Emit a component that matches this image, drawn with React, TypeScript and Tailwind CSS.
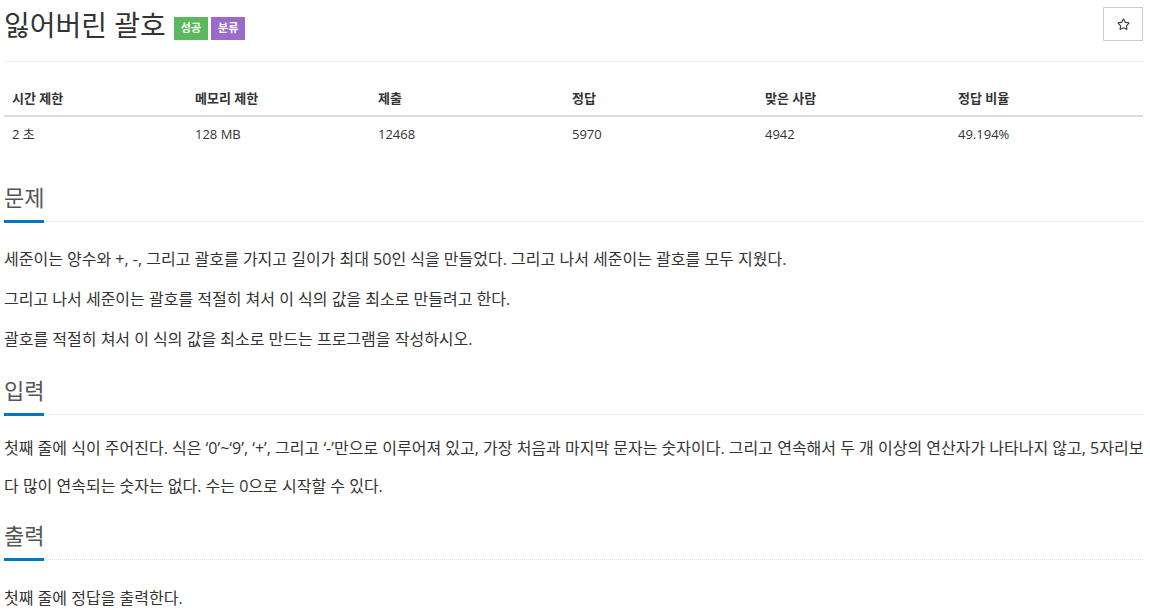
import { Star } from 'lucide-react';

const stats = [
  { label: '시간 제한', value: '2 초', w: 'w-[183px]' },
  { label: '메모리 제한', value: '128 MB', w: 'w-[183px]' },
  { label: '제출', value: '12468', w: 'w-[194px]' },
  { label: '정답', value: '5970', w: 'w-[193px]' },
  { label: '맞은 사람', value: '4942', w: 'w-[193px]' },
  { label: '정답 비율', value: '49.194%', w: 'flex-1' },
];

function Headline({ title, mt }: { title: string; mt: string }) {
  return (
    <div className={`${mt} border-b border-dotted border-[#dddddd] h-[44px] flex items-end`}>
      <h2 className="text-[22px] leading-[34px] text-[#555555] border-b-[3px] border-[#0076c0] -mb-[2px] pb-[6px]">
        {title}
      </h2>
    </div>
  );
}

export default function App() {
  const font = { fontFamily: '"Open Sans", "Noto Sans CJK KR", sans-serif' };
  return (
    <div className="bg-white min-h-[615px] pl-[4px] pr-[7px] text-[#333333]" style={font}>
      {/* page header */}
      <div className="flex items-start justify-between border-b border-[#eeeeee] h-[62px]">
        <div className="flex items-center pt-[5px]">
          <h1 className="text-[28px] leading-[40px] text-[#333333]">잃어버린 괄호</h1>
          <span className="ml-[8px] mt-[6px] h-[23px] px-[7px] flex items-center bg-[#5cb85c] text-white text-[11px] font-bold">
            성공
          </span>
          <span className="ml-[3px] mt-[6px] h-[23px] px-[7px] flex items-center bg-[#9b6bcc] text-white text-[11px] font-bold">
            분류
          </span>
        </div>
        <button className="mt-[7px] w-[40px] h-[34px] border border-[#cccccc] flex items-center justify-center bg-white">
          <Star className="w-[13px] h-[13px] text-[#333333]" strokeWidth={2} />
        </button>
      </div>

      {/* stats table */}
      <div className="mt-[21px] text-[13px]">
        <div className="flex h-[34px] items-center border-b-2 border-[#dddddd] font-bold">
          {stats.map((s) => (
            <div key={s.label} className={`${s.w} px-[8px]`}>
              {s.label}
            </div>
          ))}
        </div>
        <div className="flex h-[36px] items-center">
          {stats.map((s) => (
            <div key={s.label} className={`${s.w} px-[8px]`}>
              {s.value}
            </div>
          ))}
        </div>
      </div>

      <Headline title="문제" mt="mt-[25px]" />
      <div className="pt-[26px] text-[16px] leading-[22px] flex flex-col gap-[18px]">
        <p>세준이는 양수와 +, -, 그리고 괄호를 가지고 길이가 최대 50인 식을 만들었다. 그리고 나서 세준이는 괄호를 모두 지웠다.</p>
        <p>그리고 나서 세준이는 괄호를 적절히 쳐서 이 식의 값을 최소로 만들려고 한다.</p>
        <p>괄호를 적절히 쳐서 이 식의 값을 최소로 만드는 프로그램을 작성하시오.</p>
      </div>

      <Headline title="입력" mt="mt-[21px]" />
      <div className="pt-[14px] text-[16px] leading-[38px]">
        <p>
          <span className="whitespace-nowrap">
            첫째 줄에 식이 주어진다. 식은 ‘0’~‘9’, ‘+’, 그리고 ‘-’만으로 이루어져 있고, 가장 처음과 마지막 문자는 숫자이다. 그리고 연속해서 두 개 이상의 연산자가 나타나지 않고, 5자리보
          </span>
          <br />
          다 많이 연속되는 숫자는 없다. 수는 0으로 시작할 수 있다.
        </p>
      </div>

      <Headline title="출력" mt="mt-[11px]" />
      <div className="pt-[27px] text-[16px] leading-[22px]">
        <p>첫째 줄에 정답을 출력한다.</p>
      </div>
    </div>
  );
}
